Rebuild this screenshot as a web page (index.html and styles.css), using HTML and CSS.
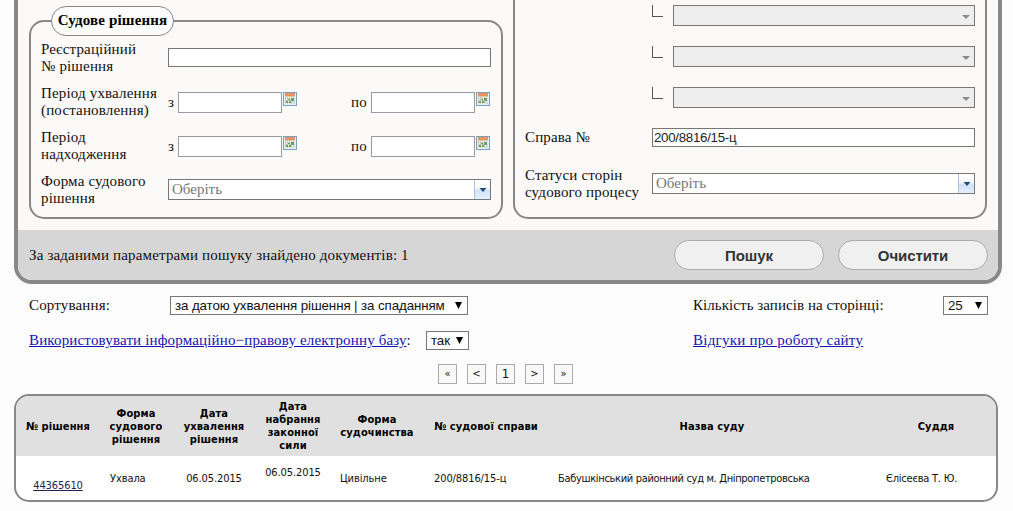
FILE: index.html
```html
<!DOCTYPE html>
<html lang="uk">
<head>
  <meta charset="UTF-8">
  <meta name="viewport" content="width=device-width, initial-scale=1.0">
  <title>Реєстр судових рішень</title>
  <link rel="stylesheet" href="styles.css">
</head>
<body>

  <svg class="sprite" width="0" height="0">
    <symbol id="calendar" viewBox="0 0 14 14">
      <rect x="0.5" y="0.5" width="13" height="13" fill="#e4f1fa" stroke="#7b9fbd"/>
      <rect x="2" y="1" width="10" height="3" fill="#e8935f"/>
      <path d="M2 4h10v5l-3 3H2z" fill="#fbf8ea"/>
      <path d="M2 4.5h10M2 6.5h10M2 8.5h10M2 10.5h8M2.5 4v8M4.5 4v8M6.5 4v8M8.5 4v8M10.5 4v6" stroke="#b9ab90" stroke-width="0.5"/>
      <path d="M5 7h2v1H5zM8 6h3v3H8zM3 9h2v2H3zM6 9h2v2H6z" fill="#5fa36a"/>
      <path d="M9 12l3-3v3z" fill="#bcdcf2"/>
    </symbol>
  </svg>

  <div class="search-box">
    <div class="panels">
      <div class="panel decision">
        <div class="panel-title">Судове рішення</div>
        <div class="row">
          <label class="label" for="regNumber">Реєстраційний<br>№ рішення</label>
          <input type="text" id="regNumber" class="text-input">
        </div>
        <div class="row">
          <span class="label">Період ухвалення<br>(постановлення)</span>
          <span class="from">з</span><input type="text" class="date-input"><svg class="calendar"><use href="#calendar"/></svg>
          <span class="to">по</span><input type="text" class="date-input"><svg class="calendar"><use href="#calendar"/></svg>
        </div>
        <div class="row">
          <span class="label">Період<br>надходження</span>
          <span class="from">з</span><input type="text" class="date-input"><svg class="calendar"><use href="#calendar"/></svg>
          <span class="to">по</span><input type="text" class="date-input"><svg class="calendar"><use href="#calendar"/></svg>
        </div>
        <div class="row">
          <span class="label">Форма судового<br>рішення</span>
          <div class="combo">
            <span class="combo-text">Оберіть</span>
            <span class="combo-button"><svg width="8" height="4"><path d="M0.5 0h7L4 4z" fill="#244a78"/></svg></span>
          </div>
        </div>
      </div>

      <div class="panel case">
        <div class="sub-row"><i class="corner"></i><div class="combo disabled"><svg width="8" height="4"><path d="M0 0h8L4 4z" fill="#8a8a8a"/></svg></div></div>
        <div class="sub-row"><i class="corner"></i><div class="combo disabled"><svg width="8" height="4"><path d="M0 0h8L4 4z" fill="#8a8a8a"/></svg></div></div>
        <div class="sub-row"><i class="corner"></i><div class="combo disabled"><svg width="8" height="4"><path d="M0 0h8L4 4z" fill="#8a8a8a"/></svg></div></div>
        <div class="row case-number">
          <label class="label" for="caseNumber">Справа №</label>
          <input type="text" id="caseNumber" class="text-input" value="200/8816/15-ц">
        </div>
        <div class="row case-status">
          <span class="label">Статуси сторін<br>судового процесу</span>
          <div class="combo">
            <span class="combo-text">Оберіть</span>
            <span class="combo-button"><svg width="8" height="4"><path d="M0.5 0h7L4 4z" fill="#244a78"/></svg></span>
          </div>
        </div>
      </div>
    </div>

    <div class="search-footer">
      <span class="found">За заданими параметрами пошуку знайдено документів: 1</span>
      <button class="button">Пошук</button>
      <button class="button">Очистити</button>
    </div>
  </div>

  <div class="options">
    <span class="sort-label">Сортування:</span>
    <div class="select sort">за датою ухвалення рішення | за спаданням<svg width="7" height="7"><path d="M0 0h7L3.5 7z"/></svg></div>
    <span class="count-label">Кількість записів на сторінці:</span>
    <div class="select count">25<svg width="7" height="7"><path d="M0 0h7L3.5 7z"/></svg></div>
  </div>
  <div class="options second">
    <span class="base-label"><a href="#">Використовувати інформаційно−правову електронну базу</a>:</span>
    <div class="select base">так<svg width="7" height="7"><path d="M0 0h7L3.5 7z"/></svg></div>
    <a href="#" class="feedback">Відгуки про роботу сайту</a>
  </div>

  <div class="pager">
    <span class="page">«</span>
    <span class="page">&lt;</span>
    <span class="page current">1</span>
    <span class="page">&gt;</span>
    <span class="page">»</span>
  </div>

  <div class="results">
    <table>
      <colgroup>
        <col class="c-id"><col class="c-form"><col class="c-date"><col class="c-valid">
        <col class="c-type"><col class="c-case"><col class="c-court"><col class="c-judge">
      </colgroup>
      <thead>
        <tr>
          <th>№ рішення</th>
          <th>Форма судового рішення</th>
          <th>Дата ухвалення рішення</th>
          <th>Дата набрання законної сили</th>
          <th>Форма судочинства</th>
          <th>№ судової справи</th>
          <th>Назва суду</th>
          <th>Суддя</th>
        </tr>
      </thead>
      <tbody>
        <tr>
          <td class="id"><a href="#">44365610</a></td>
          <td>Ухвала</td>
          <td class="date">06.05.2015</td>
          <td class="date valid">06.05.2015</td>
          <td>Цивільне</td>
          <td>200/8816/15-ц</td>
          <td class="court">Бабушкінський районний суд м. Дніпропетровська</td>
          <td class="judge">Єлісеєва Т. Ю.</td>
        </tr>
      </tbody>
    </table>
  </div>

</body>
</html>
```
FILE: styles.css
```css
* {
  box-sizing: border-box;
}

body {
  margin: 0;
  height: 511px;
  overflow: hidden;
  background-color: #fcfcfc;
  color: #111;
  font-family: "Liberation Serif", "Times New Roman", serif;
  font-size: 15px;
  line-height: 17px;
  letter-spacing: 0.16px;
}

a {
  color: #1414b4;
}

.sprite {
  display: none;
}

.search-box {
  width: 988px;
  height: 284px;
  margin-left: 14px;
  border: 4px solid #888;
  border-top: none;
  border-radius: 0 0 18px 18px;
  background-color: #fcfaf8;
  overflow: hidden;
}

.panels {
  display: flex;
  gap: 10px;
  height: 230px;
  padding: 0 11px 11px;
}

.panel {
  width: 474px;
  padding: 0 10px;
  border: 2px solid #888;
  border-radius: 15px;
}

.decision {
  height: 199px;
  margin-top: 20px;
}

.case {
  height: 219px;
  border-top: none;
  border-radius: 0 0 15px 15px;
}

.panel-title {
  width: 123px;
  height: 30px;
  margin: -16px 0 5px 10px;
  border: 1px solid #888;
  border-radius: 15px;
  background-color: #fcfcfc;
  font-weight: bold;
  line-height: 27px;
  text-align: center;
  color: #000;
}

.row {
  display: flex;
  align-items: center;
  height: 34px;
  margin-bottom: 10px;
}

.label {
  width: 127px;
  white-space: nowrap;
}

.text-input {
  width: 323px;
  height: 19px;
  padding: 0 0 0 1px;
  border: 1px solid #777;
  background-color: #fff;
  font: 13.33px "Liberation Sans", Arial, sans-serif;
  letter-spacing: -0.3px;
  color: #222;
}

#regNumber {
  margin-bottom: 1px;
}

.date-input {
  width: 104px;
  height: 21px;
  border: 1px solid #999ba3;
  background-color: #fff;
}

.from {
  width: 10px;
}

.to {
  width: 20px;
  margin-left: 54px;
}

.calendar {
  width: 14px;
  height: 14px;
  margin: 0 0 7px 1px;
}

.combo {
  display: flex;
  width: 323px;
  height: 21px;
  border: 1px solid #777;
  background-color: #fff;
}

.row .combo {
  margin-bottom: 2px;
}

.combo-text {
  flex: 1;
  padding-left: 3px;
  line-height: 19px;
  letter-spacing: 0;
  color: #777;
}

.combo-button {
  display: flex;
  align-items: center;
  justify-content: center;
  width: 16px;
  padding-top: 2px;
  border-left: 1px solid #a8c4e0;
  background: linear-gradient(#fff 0%, #f2f7fd 45%, #cfe2f8 55%, #e4effc 100%);
}

.combo.disabled {
  width: 302px;
  align-items: center;
  justify-content: flex-end;
  padding: 2px 4px 0 0;
  background-color: #eee;
}

.sub-row {
  display: flex;
  height: 21px;
  margin: 0 0 20px 127px;
}

.sub-row:first-child {
  margin-top: 5px;
}

.corner {
  width: 11px;
  height: 12px;
  margin-right: 10px;
  border-left: 1px solid #555;
  border-bottom: 1px solid #555;
}

.case-number {
  height: 19px;
  margin-bottom: 20px;
}

.search-footer {
  display: flex;
  align-items: center;
  height: 50px;
  padding: 0 10px 0 11px;
  background-color: #d6d6d6;
}

.found {
  flex: 1;
}

.button {
  width: 150px;
  height: 30px;
  margin-left: 14px;
  padding: 0;
  border: 1px solid #aaa;
  border-radius: 15px;
  background-color: #f0f0f0;
  color: #333;
  font: bold 15px "Liberation Sans", Arial, sans-serif;
  letter-spacing: -0.1px;
}

.options {
  display: flex;
  align-items: center;
  height: 19px;
  margin: 12px 25px 0 29px;
}

.options.second {
  margin-top: 16px;
}

.select {
  display: flex;
  align-items: center;
  justify-content: space-between;
  height: 19px;
  padding: 0 5px 0 4px;
  border: 1px solid #777;
  background-color: #fff;
  color: #111;
  font: 13.33px "Liberation Sans", Arial, sans-serif;
  letter-spacing: -0.1px;
  white-space: nowrap;
}

.sort-label {
  width: 141px;
}

.sort {
  width: 298px;
}

.count-label {
  flex: 1;
  margin-left: 225px;
  letter-spacing: 0.06px;
}

.count {
  width: 45px;
}

.base-label {
  width: 397px;
  white-space: nowrap;
}

.base {
  width: 43px;
}

.feedback {
  margin-left: 224px;
  letter-spacing: 0.25px;
}

.pager {
  display: flex;
  gap: 10px;
  margin: 14px 0 10px 438px;
}

.page {
  width: 19px;
  height: 20px;
  border: 1px solid #aaa;
  background-color: #f8f8f8;
  font: 11px/18px "DejaVu Sans Condensed", Tahoma, sans-serif;
  letter-spacing: 0;
  text-align: center;
}

.page.current {
  font-size: 13px;
}

.results {
  width: 984px;
  height: 108px;
  margin-left: 14px;
  border: 2px solid #888;
  border-radius: 15px;
  background-color: #fff;
  overflow: hidden;
}

table {
  width: 980px;
  border-collapse: collapse;
  table-layout: fixed;
  font: 11px/13px "DejaVu Sans Condensed", Tahoma, sans-serif;
  letter-spacing: 0;
}

.c-id { width: 84px; }
.c-form { width: 72px; }
.c-date { width: 84px; }
.c-valid { width: 74px; }
.c-type { width: 94px; }
.c-case { width: 124px; }
.c-court { width: 328px; }
.c-judge { width: 120px; }

th {
  height: 60px;
  padding: 1px 4px;
  background-color: #e0e0e0;
  color: #000;
  letter-spacing: 0.1px;
}

td {
  height: 44px;
  padding: 0 0 0 10px;
  letter-spacing: -0.1px;
  white-space: nowrap;
}

td.date {
  padding: 0;
  text-align: center;
}

td.valid {
  padding-bottom: 12px;
}

td.court {
  letter-spacing: -0.33px;
}

td.judge {
  letter-spacing: -0.22px;
}

td.id {
  padding: 14px 0 0;
  text-align: center;
}

td.id a {
  color: #22224a;
}
```
